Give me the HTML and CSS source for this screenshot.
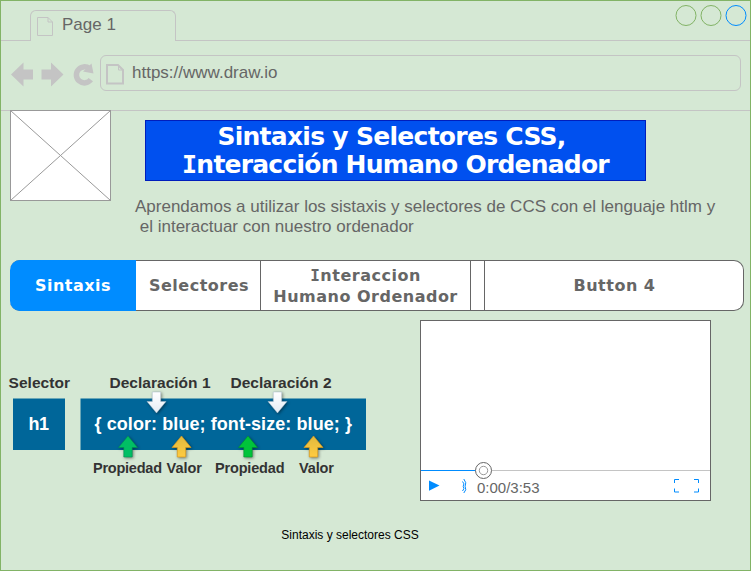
FILE: index.html
```html
<!DOCTYPE html>
<html lang="es">
<head>
<meta charset="utf-8">
<title>Sintaxis y Selectores CSS</title>
<link rel="stylesheet" href="styles.css">
</head>
<body>
<div class="window">
  <header class="tabs">
    <div class="tabs-lead"></div>
    <div class="tab">
      <svg class="tab-icon" width="16" height="20" viewBox="0 0 16 20"><path d="M.5.5h10.500l4.500 4.500v13.500h-15zM11 .5V5h4.500"/></svg>
      <span class="tab-label">Page 1</span>
    </div>
    <div class="tabs-rest">
      <svg class="controls" width="74" height="24" viewBox="0 0 74 24"><circle cx="12" cy="12.500" r="10"/><circle cx="37" cy="12.500" r="10"/><circle class="active" cx="62" cy="12.500" r="10"/></svg>
    </div>
  </header>
  <div class="toolbar">
    <svg class="history" width="89" height="26" viewBox="0 0 89 26">
      <path class="solid" d="M0 13.500L12.500 1.500v7H22v10h-9.500v7zM52.500 13.500L40 1.500v7h-9.500v10H40v7z"/>
      <path class="reload" d="M78.500 7.700a8 8 0 1 0 1.300 11"/>
      <path class="solid" d="M80.500 2.500L82.500 12.500 72 10.500z"/>
    </svg>
    <div class="address">
      <svg class="page-icon" width="18" height="21" viewBox="0 0 18 21"><path d="M1 1h11l5 5v13.500H1z"/><path class="fold" d="M12.500 1v5H17"/></svg>
      <span class="url">https://www.draw.io</span>
    </div>
  </div>
  <main>
    <section class="hero">
      <svg class="placeholder" width="101" height="91" viewBox="0 0 101 91"><rect x=".5" y=".5" width="100" height="90"/><path d="M.5.5l100 90M100.500.5l-100 90"/></svg>
      <div class="intro">
        <h1><span class="h-a">Sintaxis y Selectores CSS,</span><br><span class="h-b"><span class="slab">I</span>nteracción Humano Ordenador</span></h1>
        <p>Aprendamos a utilizar los sistaxis y selectores de CCS con el lenguaje htlm y<br>&nbsp;el interactuar con nuestro ordenador</p>
      </div>
    </section>
    <nav>
      <a class="n1">Sintaxis</a><a class="n2">Selectores</a><a class="n3"><span><span class="slab">I</span>nteraccion<br>Humano Ordenador</span></a><a class="n4"></a><a class="n5">Button 4</a>
    </nav>
    <section class="media">
      <svg class="diagram" width="380" height="120" viewBox="0 370 380 120">
        <defs>
          <path id="up" d="M0-10.500L9.500 1H4.200v9.500h-8.400V1h-5.300z"/>
          <linearGradient id="silver" x1="0" y1="1" x2="0" y2="0"><stop offset="0" stop-color="#fff"/><stop offset="1" stop-color="#e4ecf5"/></linearGradient>
          <linearGradient id="gold" x1="0" y1="0" x2="0" y2="1"><stop offset="0" stop-color="#e0b93e"/><stop offset="1" stop-color="#ffcb40"/></linearGradient>
        </defs>
        <path class="box" d="M13 398.500h52V450H13zM80.500 398.500H366V450H80.500z"/>
        <g class="label">
          <text x="8.500" y="388" textLength="61.500">Selector</text>
          <text x="109.500" y="388" textLength="101">Declaración 1</text>
          <text x="230.500" y="388" textLength="101">Declaración 2</text>
        </g>
        <g class="sub">
          <text x="93" y="473" textLength="69">Propiedad</text>
          <text x="166.500" y="473" textLength="35.500">Valor</text>
          <text x="215" y="473" textLength="69.500">Propiedad</text>
          <text x="299" y="473" textLength="35">Valor</text>
        </g>
        <g class="code">
          <text x="28.500" y="429.500" textLength="20.500">h1</text>
          <text x="94.500" y="429.500" textLength="257.500">{ color: blue; font-size: blue; }</text>
        </g>
        <g class="arrows">
          <use class="silver" href="#up" transform="translate(156.500 402.500) rotate(180)"/>
          <use class="silver" href="#up" transform="translate(277.500 402.500) rotate(180)"/>
          <use class="mint" href="#up" x="128" y="446.500"/>
          <use class="gold" href="#up" x="181.500" y="446.500"/>
          <use class="green" href="#up" x="248" y="446.500"/>
          <use class="gold" href="#up" x="313.500" y="446.500"/>
        </g>
      </svg>
      <div class="player">
        <div class="screen"></div>
        <div class="controls-bar">
          <svg class="track" width="289" height="18" viewBox="0 0 289 18"><path class="rest" d="M62 9.500h227"/><path class="played" d="M0 9.500h62"/><circle class="knob" cx="62.500" cy="9.500" r="8"/><circle class="dot" cx="62.500" cy="9.500" r="4.200"/></svg>
          <div class="buttons">
            <svg width="40" height="16" viewBox="0 0 40 16"><path class="play" d="M0 1.500l10.500 5L0 11.800z"/><path class="sound" d="M33.500 2.500q2.500 2.300.7 4.800q1.800 2.500-.7 4.700M34.800 0q3.300 3.800 1.300 7.300q2 3.500-1.300 6.700"/></svg>
            <span class="time">0:00/3:53</span>
            <svg class="full" width="25" height="14" viewBox="0 0 25 14"><path d="M.5 4V.5H5M20 .5h4.500V4M24.500 9.500v3.500H20M5 13H.5V9.500"/></svg>
          </div>
        </div>
      </div>
    </section>
    <p class="caption">Sintaxis y selectores CSS</p>
  </main>
</div>
</body>
</html>
```

FILE: styles.css
```css
* { box-sizing: border-box; }
body { margin: 0; font-family: "Liberation Sans", Arial, sans-serif; color: #666; }
svg { display: block; fill: none; flex: none; }
.window { width: 751px; height: 571px; border: 1px solid #82b366; background: #d5e8d4; overflow: hidden; }

.tabs { display: flex; height: 40px; }
.tabs-lead { width: 29px; border-bottom: 1px solid #c4c4c4; }
.tab { display: flex; width: 146px; margin-top: 9px; border: 1px solid #c4c4c4; border-bottom: 0; border-radius: 6px 6px 0 0; padding: 6px 0 0 6px; }
.tab-icon { stroke: #c4c4c4; }
.tab-label { margin: -2px 0 0 9px; font-size: 17px; line-height: 20px; }
.tabs-rest { flex: 1; display: flex; justify-content: flex-end; border-bottom: 1px solid #c4c4c4; padding: 2px 2px 0 0; }
.controls { stroke: #82b366; stroke-width: 1; }
.controls .active { stroke: #008cff; }

.toolbar { display: flex; height: 70px; padding: 14px 9px 0 10px; border-bottom: 1px solid #c4c4c4; }
.history { margin-top: 6px; }
.solid { fill: #c4c4c4; }
.reload { stroke: #c4c4c4; stroke-width: 5.5; }
.address { display: flex; flex: 1; height: 36px; border: 1px solid #c4c4c4; border-radius: 6px; padding: 8px 0 0 5px; }
.page-icon { stroke: #c4c4c4; stroke-width: 2; }
.page-icon .fold { stroke-width: 1; }
.url { margin-left: 8px; font-size: 17px; line-height: 18px; }

.hero { display: flex; height: 150px; margin: -1px 0 0 9px; }
.placeholder { stroke: #999; }
.placeholder rect { fill: #fff; }
.intro { margin: 10px 0 0 24px; }
h1 { width: 501px; height: 61px; margin: 0 0 0 10px; padding-top: 2px; border: 1px solid #001dbc; background: #0050ef; color: #fff; font: bold 25px/28px "DejaVu Sans", Verdana, sans-serif; text-align: center; white-space: nowrap; }
.h-a { letter-spacing: -.72px; margin-right: 8px; margin-left: 0; }
.h-b { letter-spacing: -.78px; }
.slab { font-family: "DejaVu Sans Mono", monospace; line-height: 1; }
.intro p { margin: 16px 0 0; font-size: 17px; line-height: 20px; white-space: nowrap; }

nav { display: flex; width: 734px; height: 51px; margin-left: 9px; border: 1px solid #666; border-left: 0; border-radius: 10px; background: #fff; font: bold 16px/21px "DejaVu Sans", Verdana, sans-serif; letter-spacing: .5px; text-align: center; }
nav a { display: flex; align-items: center; justify-content: center; white-space: nowrap; border-right: 1px solid #666; }
nav .n1 { width: 126px; margin: -1px 0; border: 0; border-radius: 10px 0 0 10px; background: #008cff; color: #fff; }
nav .n2 { width: 125px; padding-left: 2px; }
nav .n3 { width: 210px; }
nav .n4 { width: 14px; }
nav .n5 { flex: 1; border: 0; padding-left: 1px; }

.media { display: flex; margin-top: 9px; }
.diagram { margin: 50px 0 0 -1px; font-family: "Liberation Sans", Arial, sans-serif; font-weight: bold; }
.box { fill: #069; }
.label { fill: #333; font-size: 15.500px; }
.sub { fill: #333; font-size: 14.500px; }
.code { fill: #fff; font-size: 18px; }
.arrows { filter: drop-shadow(1.500px 1.500px 1.500px rgba(0, 0, 0, .45)); }
.silver { fill: url(#silver); stroke: #a8bdcc; stroke-width: .5; }
.mint { fill: #00bf64; stroke: #008f52; stroke-width: .6; }
.green { fill: #00c43b; stroke: #00922e; stroke-width: .6; }
.gold { fill: url(#gold); stroke: #d8981b; stroke-width: .7; }

.player { width: 291px; height: 181px; margin-left: 40px; border: 1px solid #666; background: #fff; }
.screen { height: 140px; }
.played { stroke: #008cff; }
.rest { stroke: #c4c4c4; }
.knob { fill: #fff; stroke: #666; }
.dot { stroke: #999; }
.buttons { display: flex; padding: 0 11px 0 8px; }
.play { fill: #008cff; }
.sound { stroke: #008cff; }
.time { flex: 1; margin: 0 0 0 8px; font-size: 15px; line-height: 18px; }
.full { stroke: #008cff; }
.caption { width: 140px; margin: 27px 0 0 279px; color: #000; font-size: 12px; line-height: 14px; text-align: center; white-space: nowrap; }
```
